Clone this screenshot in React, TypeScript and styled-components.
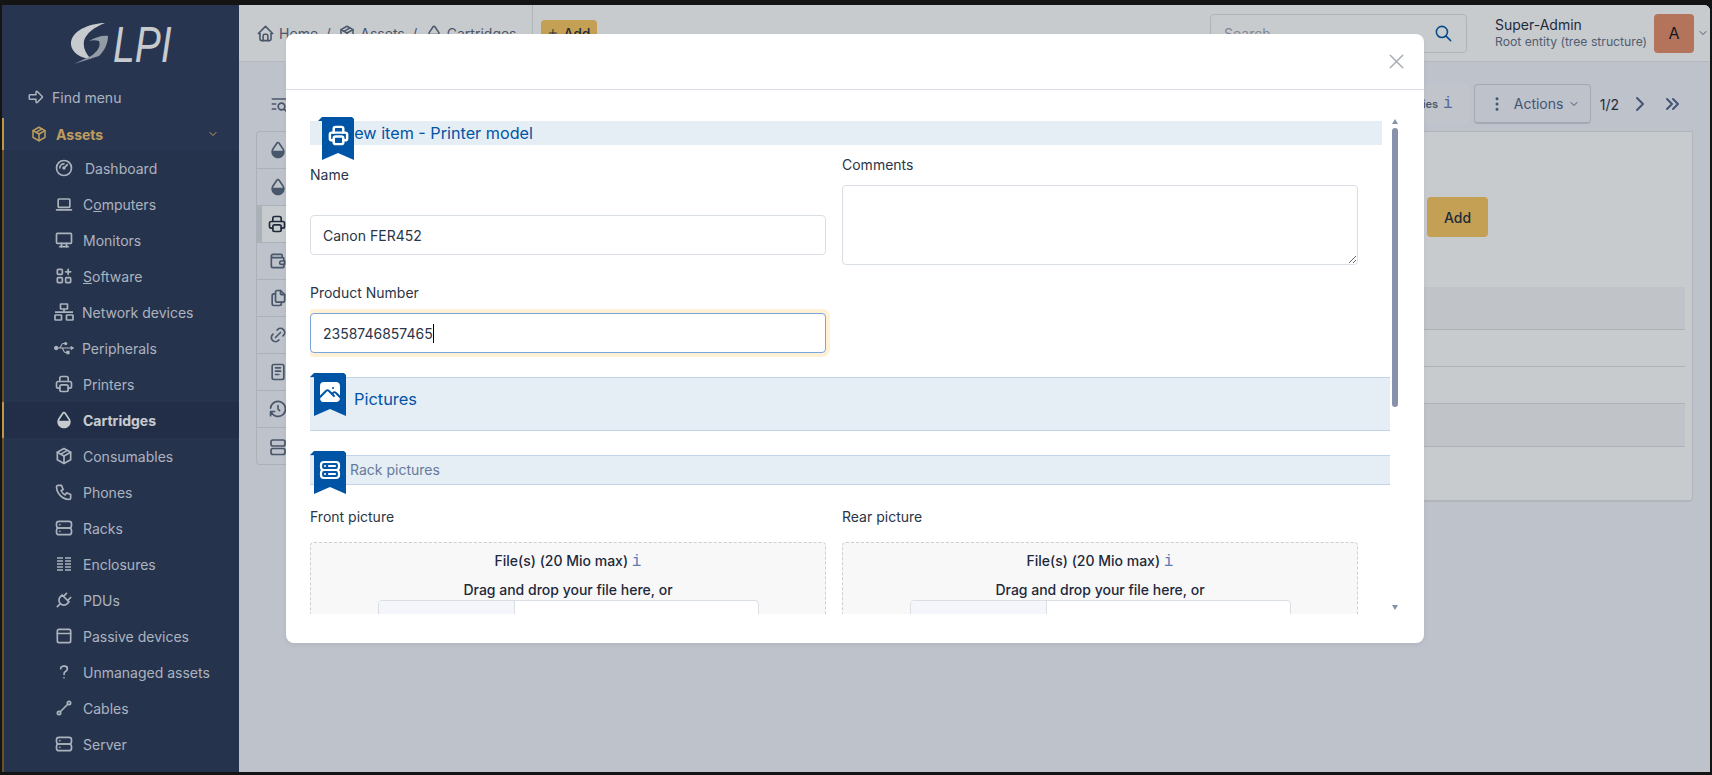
import React from "react";
import styled, { createGlobalStyle } from "styled-components";
import { FaUsb } from "react-icons/fa";
import {
  TbApps, TbArrowBigRight, TbChevronDown, TbChevronRight, TbChevronsRight,
  TbDeviceDesktop, TbDeviceLaptop, TbDotsVertical, TbDropletHalf2Filled, TbFiles, TbGauge, TbHistory,
  TbHome, TbLayoutNavbar, TbLine, TbLink, TbListSearch, TbNotes, TbPackage, TbPhone, TbPhotoFilled, TbPlug,
  TbPlus, TbPrinter, TbQuestionMark, TbSearch, TbServer, TbServer2, TbWallet, TbX,
} from "react-icons/tb";

const GlobalStyle = createGlobalStyle`
  html, body, #root { height: 100%; }
  body {
    margin: 0;
    background: #141414;
    font-family: Inter, "Noto Sans", sans-serif;
    font-size: 14px;
    color: #1e293b;
    overflow: hidden;
  }
  * { box-sizing: border-box; }
`;

const Screen = styled.div`
  height: 100%;
  padding: 5px 2px 3px;
`;

const Page = styled.div`
  position: relative;
  display: flex;
  height: 100%;
  overflow: hidden;
  border-top-right-radius: 6px;
  background: #f2f3fb;
`;

// Sidebar
const Sidebar = styled.aside`
  width: 237px;
  flex: none;
  display: flex;
  flex-direction: column;
  background: #2a3759;
  color: #d9dfe9;
`;

const LogoBox = styled.div`
  height: 74px;
  flex: none;
  display: flex;
  align-items: center;
  justify-content: center;
  padding-top: 6px;
`;

const LogoText = styled.span`
  display: inline-block;
  width: 58px;
  font-family: "Liberation Sans", sans-serif;
  font-style: italic;
  font-size: 50px;
  line-height: 1;
  white-space: nowrap;
  transform: scaleX(0.78);
  transform-origin: left center;
  color: #ffffff;
`;

const FindRow = styled.div`
  height: 36px;
  flex: none;
  display: flex;
  align-items: center;
  gap: 7px;
  padding-left: 25px;
`;

const GroupRow = styled.div`
  height: 32px;
  flex: none;
  margin-top: 3px;
  display: flex;
  align-items: center;
  gap: 8px;
  padding-left: 26px;
  padding-right: 20px;
  border-left: 2px solid #f0b94e;
  color: #f1c268;
  font-weight: 700;
  svg:last-child { margin-left: auto; }
`;

const SubMenu = styled.div`
  flex: 1;
  border-left: 2px solid #7f5f22;
  background: #273452;
`;

const MenuItem = styled.div<{ $active?: boolean; $shift?: number }>`
  height: 36px;
  display: flex;
  align-items: center;
  gap: ${(p) => 9 + (p.$shift ?? 0)}px;
  padding-left: 50px;
  margin-left: -2px;
  border-left: 2px solid ${(p) => (p.$active ? "#f0b94e" : "transparent")};
  background: ${(p) => (p.$active ? "#222e4b" : "transparent")};
  font-weight: ${(p) => (p.$active ? 700 : 400)};
  color: ${(p) => (p.$active ? "#ffffff" : "#d9dfe9")};
`;

// Main column
const Main = styled.main`
  flex: 1;
  min-width: 0;
  display: flex;
  flex-direction: column;
`;

const Header = styled.header`
  height: 57px;
  flex: none;
  display: flex;
  align-items: center;
  padding: 0 1px 0 17px;
  background: #ffffff;
  border-bottom: 1px solid #e6e8ec;
  color: #56647a;
`;

const Crumb = styled.span`
  display: inline-flex;
  align-items: center;
  gap: 4px;
`;

const Slash = styled.span`
  margin: 0 7.5px;
`;

const HeaderDivider = styled.span`
  width: 1px;
  height: 56px;
  margin: 0 8px 0 15px;
  background: #dfe2e7;
`;

const GoldButton = styled.button`
  display: inline-flex;
  align-items: center;
  justify-content: center;
  gap: 5px;
  border: 0;
  border-radius: 4px;
  background: #f8c65c;
  color: #1e293b;
  font: 500 14px Inter, sans-serif;
`;

const HeaderAdd = styled(GoldButton)`
  width: 56px;
  height: 26px;
`;

const SearchBox = styled.div`
  width: 257px;
  height: 39px;
  margin-left: auto;
  display: flex;
  align-items: center;
  justify-content: space-between;
  padding: 0 13px;
  border: 1px solid #dde0e6;
  border-radius: 4px;
  color: #0054a6;
`;

const Placeholder = styled.span`
  color: #a0a8b5;
`;

const UserBlock = styled.div`
  margin-left: 28px;
  width: 159px;
  line-height: 17px;
  white-space: nowrap;
`;

const UserName = styled.div`
  color: #1e293b;
`;

const UserEntity = styled.div`
  font-size: 12.2px;
  color: #5f6e83;
`;

const Avatar = styled.div`
  width: 40px;
  height: 39px;
  display: flex;
  align-items: center;
  justify-content: center;
  border-radius: 4px;
  background: #e58a66;
  color: #111;
  font-size: 16px;
`;

const Toolbar = styled.div`
  height: 40px;
  margin-top: 22px;
  flex: none;
  display: flex;
  align-items: center;
  padding: 0 26px 0 30px;
  color: #56647a;
`;

const EntityToggle = styled.div`
  width: 210px;
  height: 40px;
  margin-left: auto;
  display: flex;
  align-items: center;
  justify-content: flex-end;
  gap: 5px;
  padding-right: 16px;
  border-radius: 4px;
  background: #f6f7fb;
  font-size: 11px;
  font-weight: 600;
`;

const InfoMark = styled.span`
  font-family: "Liberation Mono", monospace;
  font-size: 16px;
  font-weight: 400;
  color: #5f7bb5;
`;

const ActionsButton = styled.div`
  width: 117px;
  height: 40px;
  margin-left: 5px;
  display: flex;
  align-items: center;
  padding-left: 13px;
  border: 1px solid #ced2dc;
  border-bottom-width: 2px;
  border-radius: 4px;
  background: #f2f3fb;
  color: #4e6288;
`;

const ActionsLabel = styled.span`
  margin: 0 5px 0 8px;
`;

const PageCount = styled.span`
  margin-left: 9px;
  color: #1e293b;
`;

const PagerIcon = styled.span<{ $gap: number }>`
  display: inline-flex;
  margin-left: ${(p) => p.$gap}px;
  color: #4e6288;
`;

const Workspace = styled.div`
  display: flex;
  height: 371px;
  margin: 7px 17px 0 17px;
  flex: none;
`;

const TabColumn = styled.div`
  width: 60px;
  height: 334px;
  flex: none;
  border: 1px solid #d9dce2;
  border-right: 0;
  border-radius: 4px 0 0 4px;
`;

const TabCell = styled.div<{ $active?: boolean }>`
  height: 37px;
  display: flex;
  align-items: center;
  padding-left: ${(p) => (p.$active ? 5 : 11)}px;
  border-bottom: 1px solid #d9dce2;
  border-left: ${(p) => (p.$active ? "5px solid #d9dce2" : "0")};
  background: ${(p) => (p.$active ? "#ffffff" : "transparent")};
  color: ${(p) => (p.$active ? "#1e293b" : "#56647a")};
  &:last-child { border-bottom: 0; }
`;

const Panel = styled.section`
  flex: 1;
  padding: 65px 7px 0 8px;
  background: #ffffff;
  border: 1px solid #dfe1e6;
  border-bottom-width: 2px;
  border-radius: 0 0 4px 0;
`;

const FormAdd = styled(GoldButton)`
  display: flex;
  width: 61px;
  height: 40px;
  margin: 0 197px 50px auto;
`;

const TableRow = styled.div<{ $height: number; $shaded?: boolean }>`
  height: ${(p) => p.$height}px;
  border-bottom: 1px solid #dcdee0;
  background: ${(p) => (p.$shaded ? "#f4f5f6" : "transparent")};
`;

// Modal
const Backdrop = styled.div`
  position: absolute;
  inset: 0;
  padding: 29px 0 0 284px;
  background: rgba(35, 46, 60, 0.25);
`;

const Modal = styled.div`
  width: 1138px;
  height: 609px;
  border-radius: 8px;
  background: #ffffff;
  box-shadow: 0 2px 4px rgba(35, 46, 60, 0.08);
`;

const ModalHeader = styled.div`
  height: 56px;
  display: flex;
  align-items: center;
  justify-content: flex-end;
  padding: 0 15px 0 0;
  border-bottom: 1px solid #d9dce3;
  color: #a9adb4;
`;

const ModalBody = styled.div`
  height: 524px;
  display: flex;
  padding-left: 24px;
`;

const Scroller = styled.div`
  width: 1080px;
  height: 524px;
  flex: none;
  overflow: hidden;
  padding-top: 31px;
`;

const ScrollTrack = styled.div`
  width: 6px;
  margin: 29px 0 4px 2px;
  display: flex;
  flex-direction: column;
  align-items: center;
`;

const ScrollArrow = styled.span<{ $down?: boolean }>`
  width: 0;
  height: 0;
  border-left: 3px solid transparent;
  border-right: 3px solid transparent;
  ${(p) => (p.$down ? "border-top: 5px solid #8891ab; margin-top: auto;" : "border-bottom: 5px solid #8891ab;")}
`;

const ScrollThumb = styled.div`
  width: 6px;
  height: 279px;
  margin-top: 4px;
  border-radius: 3px;
  background: #8891ab;
`;

const Band = styled.div<{ $height: number; $plain?: boolean; $mt: number }>`
  position: relative;
  display: flex;
  align-items: center;
  height: ${(p) => p.$height}px;
  margin-top: ${(p) => p.$mt}px;
  margin-right: ${(p) => (p.$plain ? 8 : 0)}px;
  background: #e5edf5;
  color: #0054a6;
  ${(p) => (p.$plain ? "" : "border-top: 1px solid #c1d4e9; border-bottom: 1px solid #c1d4e9;")}
`;

const Ribbon = styled.span<{ $left: number; $top: number }>`
  position: absolute;
  left: ${(p) => p.$left}px;
  top: ${(p) => p.$top}px;
  width: 36px;
  height: 43px;
  padding: 7px 0 0 4px;
  display: flex;
  justify-content: center;
  align-items: flex-start;
  background: #0054a6;
  color: #ffffff;
  clip-path: polygon(0 4px, 4px 0, 34px 0, 36px 2px, 36px 43px, 20px 36px, 4px 43px, 4px 4px);
`;

const BandTitle = styled.span<{ $x: number; $muted?: boolean }>`
  margin-left: ${(p) => p.$x}px;
  font-size: ${(p) => (p.$muted ? 14 : 16.4)}px;
  color: ${(p) => (p.$muted ? "#667a9a" : "#0054a6")};
  margin-top: ${(p) => (p.$muted ? -2 : -11)}px;
`;

const TitleText = styled.span`
  margin-left: 32px;
  font-size: 16.2px;
`;

const FormGrid = styled.div`
  display: grid;
  grid-template-columns: 516px 516px;
  column-gap: 16px;
`;

const LeftFields = styled.div`
  padding-top: 20px;
`;

const RightFields = styled.div`
  padding-top: 10px;
`;

const Label = styled.div<{ $gap: number; $top?: number }>`
  line-height: 20px;
  margin-top: ${(p) => p.$top ?? 0}px;
  margin-bottom: ${(p) => p.$gap}px;
  color: #2a3547;
`;

const Field = styled.div<{ $focused?: boolean }>`
  height: 40px;
  display: flex;
  align-items: center;
  padding: 0 12px;
  border: 1px solid ${(p) => (p.$focused ? "#7aa5d8" : "#dadfe5")};
  border-radius: 4px;
  background: #ffffff;
  color: #2a3547;
  ${(p) => (p.$focused ? "box-shadow: 0 0 0 4px #fff0d6;" : "")}
`;

const Caret = styled.span`
  width: 1px;
  height: 19px;
  background: #000;
`;

const Comments = styled.textarea`
  display: block;
  width: 516px;
  height: 80px;
  border: 1px solid #dadfe5;
  border-radius: 4px;
  background: #ffffff;
`;

const DropZone = styled.div`
  height: 160px;
  padding-top: 8px;
  border: 1px dashed #cfcfcf;
  border-radius: 4px;
  background: #f8f8f9;
  text-align: center;
  font-weight: 500;
  line-height: 20px;
`;

const DropHint = styled.div`
  margin-top: 8px;
`;

const FileInput = styled.div`
  width: 381px;
  height: 40px;
  margin: 0 auto;
  display: flex;
  border: 1px solid #dadfe5;
  border-radius: 4px;
  background: #ffffff;
  overflow: hidden;
`;

const FileButton = styled.div`
  width: 136px;
  border-right: 1px solid #dadfe5;
  background: #f4f6fb;
`;

type IconProps = { size?: number };

function NetworkIcon({ size = 20 }: IconProps) {
  return (
    <svg width={size} height={size} viewBox="0 0 20 20" fill="none" stroke="currentColor" strokeWidth="1.7">
      <rect x="6.5" y="2" width="7" height="5" rx="0.5" />
      <rect x="1" y="13" width="6.5" height="5" rx="0.5" />
      <rect x="12.5" y="13" width="6.5" height="5" rx="0.5" />
      <path d="M10 7v3M1 10.2h18" />
    </svg>
  );
}

function EnclosureIcon({ size = 20 }: IconProps) {
  return (
    <svg width={size} height={size} viewBox="0 0 20 20" stroke="currentColor" strokeWidth="1.6">
      <path d="M3 4h6M3 7h6M3 10h6M3 13h6M3 16h6M11 4h6M11 7h6M11 10h6M11 13h6M11 16h6" />
    </svg>
  );
}

function RowsIcon({ size = 20 }: IconProps) {
  return (
    <svg width={size} height={size} viewBox="0 0 20 20" fill="none" stroke="currentColor" strokeWidth="1.7">
      <rect x="3" y="3" width="14" height="6" rx="2" />
      <rect x="3" y="11.5" width="14" height="6" rx="2" />
    </svg>
  );
}

const menu = [
  { icon: TbGauge, label: "Dashboard", shift: 2 },
  { icon: TbDeviceLaptop, label: <>C<u>o</u>mputers</> },
  { icon: TbDeviceDesktop, label: "Monitors" },
  { icon: TbApps, label: <><u>S</u>oftware</> },
  { icon: NetworkIcon, label: "Network devices", shift: -1 },
  { icon: FaUsb, label: "Peripherals", shift: -1 },
  { icon: TbPrinter, label: "Printers" },
  { icon: TbDropletHalf2Filled, label: "Cartridges", active: true },
  { icon: TbPackage, label: "Consumables" },
  { icon: TbPhone, label: "Phones" },
  { icon: TbServer, label: "Racks" },
  { icon: EnclosureIcon, label: "Enclosures" },
  { icon: TbPlug, label: "PDUs" },
  { icon: TbLayoutNavbar, label: "Passive devices" },
  { icon: TbQuestionMark, label: "Unmanaged assets" },
  { icon: TbLine, label: "Cables" },
  { icon: TbServer, label: "Server" },
];

const tabs = [TbDropletHalf2Filled, TbDropletHalf2Filled, TbPrinter, TbWallet, TbFiles, TbLink, TbNotes, TbHistory, RowsIcon];

function GlpiMark() {
  return (
    <svg width="42" height="44" viewBox="0 0 42 44">
      <path d="M34 0 C22 0 2 6 0 19 C-1 28 8 35 20 36 C14 30 12 24 13 18 C15 10 24 4 34 0 Z" fill="#ffffff" />
      <path d="M18 18 C25 14 32 12 37 13 C37 20 34 27 28 33 L3 41 L20 33 C27 28 30 23 28 18 C25 17 21 17 18 18 Z" fill="#b9bfc9" />
    </svg>
  );
}

export default function App() {
  return (
    <Screen>
      <GlobalStyle />
      <Page>
        <Sidebar>
          <LogoBox>
            <GlpiMark />
            <LogoText>LPI</LogoText>
          </LogoBox>
          <FindRow><TbArrowBigRight size={18} />Find menu</FindRow>
          <GroupRow><TbPackage size={18} />Assets<TbChevronDown size={12} /></GroupRow>
          <SubMenu>
            {menu.map((item, i) => (
              <MenuItem key={i} $active={item.active} $shift={item.shift}>
                <item.icon size={20} />
                <span>{item.label}</span>
              </MenuItem>
            ))}
          </SubMenu>
        </Sidebar>

        <Main>
          <Header>
            <Crumb><TbHome size={19} />Home</Crumb>
            <Slash>/</Slash>
            <Crumb><TbPackage size={18} />Assets</Crumb>
            <Slash>/</Slash>
            <Crumb><TbDropletHalf2Filled size={18} />Cartridges</Crumb>
            <HeaderDivider />
            <HeaderAdd><TbPlus size={14} />Add</HeaderAdd>
            <SearchBox><Placeholder>Search</Placeholder><TbSearch size={19} /></SearchBox>
            <UserBlock>
              <UserName>Super-Admin</UserName>
              <UserEntity>Root entity (tree structure)</UserEntity>
            </UserBlock>
            <Avatar>A</Avatar>
            <TbChevronDown size={12} style={{ marginLeft: 3 }} />
          </Header>

          <Toolbar>
            <TbListSearch size={20} />
            <EntityToggle>Child entities<InfoMark>i</InfoMark></EntityToggle>
            <ActionsButton>
              <TbDotsVertical size={18} />
              <ActionsLabel>Actions</ActionsLabel>
              <TbChevronDown size={12} />
            </ActionsButton>
            <PageCount>1/2</PageCount>
            <PagerIcon $gap={9}><TbChevronRight size={24} /></PagerIcon>
            <PagerIcon $gap={8}><TbChevronsRight size={24} /></PagerIcon>
          </Toolbar>

          <Workspace>
            <TabColumn>
              {tabs.map((Icon, i) => (
                <TabCell key={i} $active={i === 2}><Icon size={20} /></TabCell>
              ))}
            </TabColumn>
            <Panel>
              <FormAdd>Add</FormAdd>
              <TableRow $height={43} $shaded />
              <TableRow $height={37} />
              <TableRow $height={37} />
              <TableRow $height={43} $shaded />
            </Panel>
          </Workspace>
        </Main>

        <Backdrop>
          <Modal>
            <ModalHeader><TbX size={25} strokeWidth={1.4} /></ModalHeader>
            <ModalBody>
              <Scroller>
                <Band $height={24} $mt={0} $plain>
                  <Ribbon $left={8} $top={-4}><TbPrinter size={23} strokeWidth={2.6} /></Ribbon>
                  <TitleText>New item - Printer model</TitleText>
                </Band>
                <FormGrid>
                  <LeftFields>
                    <Label $gap={30}>Name</Label>
                    <Field>Canon FER452</Field>
                    <Label $gap={10} $top={28}>Product Number</Label>
                    <Field $focused>2358746857465<Caret /></Field>
                  </LeftFields>
                  <RightFields>
                    <Label $gap={10}>Comments</Label>
                    <Comments readOnly />
                  </RightFields>
                </FormGrid>
                <Band $height={54} $mt={24}>
                  <Ribbon $left={0} $top={-5}><TbPhotoFilled size={24} /></Ribbon>
                  <BandTitle $x={44}>Pictures</BandTitle>
                </Band>
                <Band $height={30} $mt={24}>
                  <Ribbon $left={0} $top={-5}><TbServer2 size={24} strokeWidth={2.2} /></Ribbon>
                  <BandTitle $x={40} $muted>Rack pictures</BandTitle>
                </Band>
                <FormGrid>
                  <div>
                    <Label $gap={15} $top={22}>Front picture</Label>
                    <DropZone>
                      File(s) (20 Mio max) <InfoMark>i</InfoMark>
                      <DropHint>Drag and drop your file here, or</DropHint>
                      <FileInput><FileButton /></FileInput>
                    </DropZone>
                  </div>
                  <div>
                    <Label $gap={15} $top={22}>Rear picture</Label>
                    <DropZone>
                      File(s) (20 Mio max) <InfoMark>i</InfoMark>
                      <DropHint>Drag and drop your file here, or</DropHint>
                      <FileInput><FileButton /></FileInput>
                    </DropZone>
                  </div>
                </FormGrid>
              </Scroller>
              <ScrollTrack>
                <ScrollArrow />
                <ScrollThumb />
                <ScrollArrow $down />
              </ScrollTrack>
            </ModalBody>
          </Modal>
        </Backdrop>
      </Page>
    </Screen>
  );
}
